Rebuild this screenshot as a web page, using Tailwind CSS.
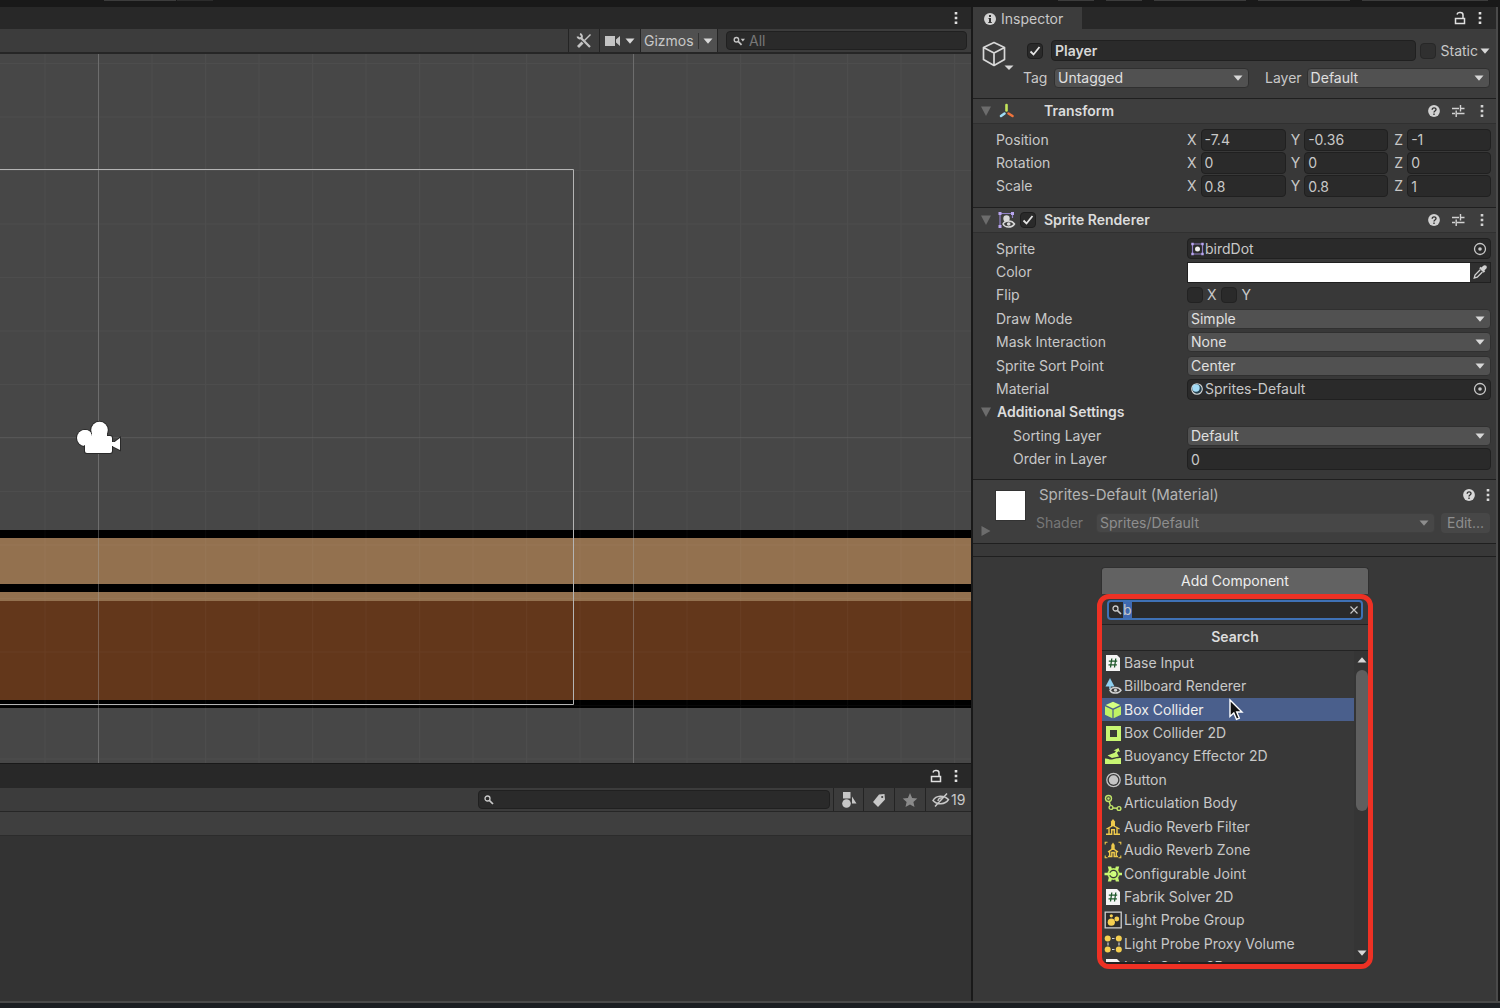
<!DOCTYPE html>
<html lang="en">

<head>
    <meta charset="UTF-8">
    <meta name="viewport" content="width=device-width, initial-scale=1.0">
    <title>Unity Editor</title>
    <script src="https://cdn.jsdelivr.net/npm/@tailwindcss/browser@4"></script>
</head>

<body class="h-screen overflow-hidden flex flex-col bg-[#191919] font-['Inter',sans-serif] text-sm leading-5 text-[#c8c8c8]">

    <!-- Icon sprite -->
    <svg class="hidden">
        <symbol id="kebab" viewBox="0 0 4 14">
            <path fill="currentColor" d="M.7 1h2.6v2.6H.7zM.7 5.7h2.6v2.6H.7zM.7 10.4h2.6V13H.7z" />
        </symbol>
        <symbol id="caret" viewBox="0 0 10 6">
            <path fill="currentColor" d="M.5.5h9L5 5.8z" />
        </symbol>
        <symbol id="fold" viewBox="0 0 12 12">
            <path fill="currentColor" d="M1 1.5h10L6 11z" />
        </symbol>
        <symbol id="lock" viewBox="0 0 12 14">
            <path fill="none" stroke="currentColor" stroke-width="1.5" d="M1.5 7.5h9v5h-9zM9 7V4a2.5 2.5 0 0 0-2.500-2.500h-1A2.500 2.500 0 0 0 3 3.500" />
        </symbol>
        <symbol id="search" viewBox="0 0 12 12">
            <circle cx="4.500" cy="4.500" r="2.500" fill="none" stroke="currentColor" stroke-width="1.300" />
            <path stroke="currentColor" stroke-width="1.700" d="M6.300 6.300l3.700 3.700" />
        </symbol>
        <symbol id="help" viewBox="0 0 12 12">
            <circle cx="6" cy="6" r="5.900" fill="currentColor" />
            <path fill="none" stroke="#333" stroke-width="1.400" d="M4.200 4.800C4.200 2.200 8 2.300 8 4.500 8 6 6 5.900 6 7.400M6 8.400v1.500" />
        </symbol>
        <symbol id="preset" viewBox="0 0 14 12">
            <path fill="none" stroke="currentColor" stroke-width="1.400" d="M1 3.500h7M9.500 0v6.500M10 3.500h3.500M1 8.500h3M5.200 5.500V12M6 8.500h7.500" />
        </symbol>
        <symbol id="check" viewBox="0 0 12 12">
            <path fill="none" stroke="currentColor" stroke-width="1.800" d="M1.500 6.500l3 3 6-7.500" />
        </symbol>
        <symbol id="target" viewBox="0 0 14 14">
            <circle cx="7" cy="7" r="5.500" fill="none" stroke="currentColor" stroke-width="1.300" />
            <circle cx="7" cy="7" r="1.800" fill="currentColor" />
        </symbol>
        <symbol id="script" viewBox="0 0 18 18">
            <path fill="#f4f4f4" d="M2 1h11l3 3v13H2z" />
            <path fill="none" stroke="#1f5a2c" stroke-width="1.300" d="M7.800 4.500l-1.300 9M11.800 4.500l-1.300 9M4.800 7.200h8.400M4.500 10.900h8.400" />
        </symbol>
    </svg>

    <!-- Lower edge of the main toolbar -->
    <div class="h-[7px] shrink-0 flex">
        <div class="ml-[104px] h-px w-[72px] bg-[#3c3c3c]"></div>
        <div class="ml-px h-px w-9 bg-[#2c2c2c]"></div>
        <div class="ml-auto mr-3 flex gap-3">
            <div class="h-px w-9 bg-[#3c3c3c]"></div>
            <div class="h-px w-9 bg-[#3c3c3c]"></div>
            <div class="h-px w-[92px] bg-[#3c3c3c]"></div>
            <div class="h-px w-[92px] bg-[#3c3c3c]"></div>
            <div class="h-px w-[126px] bg-[#3c3c3c]"></div>
        </div>
    </div>

    <div class="flex-1 min-h-0 flex gap-0.5">
        <div class="flex-1 min-w-0 flex flex-col">

            <!-- Scene view -->
            <section class="flex-1 min-h-0 flex flex-col">
                <div class="h-[22px] bg-[#282828] flex items-center justify-end pr-[13px]">
                    <button aria-label="Scene options" class="text-[#e0e0e0]"><svg class="w-1 h-3.5"><use href="#kebab" /></svg></button>
                </div>
                <div class="h-[25px] shrink-0 bg-[#3c3c3c] border-b-2 border-[#262626] flex items-stretch justify-end">
                    <button aria-label="Tools" class="w-[31px] border-l border-[#242424] flex items-center justify-center">
                        <svg class="size-4" viewBox="0 0 16 16" fill="none" stroke="#c4c4c4">
                            <path stroke-width="2.200" d="M4.500 4.500l9.500 9.500" />
                            <path stroke-width="2" d="M1.500 3.500a2.500 2.500 0 0 0 4 1.300A2.500 2.500 0 0 0 4 1" />
                            <path stroke-width="1.500" d="M14.500 1.500L8.500 7.500" />
                            <path stroke-width="2.800" d="M6.500 9.500L2 14" />
                        </svg>
                    </button>
                    <button aria-label="Scene camera" class="w-[41px] border-l border-[#242424] flex items-center justify-center gap-1">
                        <svg class="w-4 h-3" viewBox="0 0 16 12" fill="#c4c4c4"><path d="M0 1h10v10H0zM11 4.500L15 1v10l-4-3.500z" /></svg>
                        <svg class="w-2.5 h-1.5 text-[#d8d8d8]"><use href="#caret" /></svg>
                    </button>
                    <button class="w-[78px] border-x border-[#242424] bg-[#505050] flex items-center pl-[3px]">
                        <span>Gizmos</span>
                        <span class="ml-1 h-4 w-px bg-[#333]"></span>
                        <svg class="ml-1 w-2.5 h-1.5 text-[#d8d8d8]"><use href="#caret" /></svg>
                    </button>
                    <label class="my-0.5 ml-2 mr-1 w-[241px] flex items-center rounded border border-[#202020] bg-[#2a2a2a] pl-1.5">
                        <svg class="w-3 h-3 shrink-0" viewBox="0 0 14 12">
                            <circle cx="4" cy="4.500" r="2.600" fill="none" stroke="#c4c4c4" stroke-width="1.600" />
                            <path stroke="#c4c4c4" stroke-width="2" d="M6 6.500l4 4" />
                            <path fill="#c4c4c4" d="M9 3.500h5L11.500 6.500z" />
                        </svg>
                        <input aria-label="Search scene" placeholder="All" class="min-w-0 flex-1 pl-1 outline-none placeholder:text-[#777]">
                    </label>
                </div>
                <svg class="flex-1 min-h-0 w-full bg-[#474747]">
                    <defs>
                        <pattern id="grid" x="44.500" y="9" width="53.500" height="53.500" patternUnits="userSpaceOnUse">
                            <path stroke="#fff" stroke-opacity=".03" d="M.5 0v53.500M0 .5h53.500" />
                        </pattern>
                    </defs>
                    <rect y="476" width="100%" height="178" fill="#000" />
                    <rect y="484" width="100%" height="46" fill="#93714f" />
                    <rect y="538" width="100%" height="9" fill="#93714f" />
                    <rect y="547" width="100%" height="99" fill="#63371b" />
                    <rect width="100%" height="100%" fill="url(#grid)" />
                    <path stroke="#aaa" stroke-opacity=".35" d="M98.500 0v720M633.500 0v720" />
                    <path stroke="#fff" stroke-opacity=".07" d="M0 383.500h2000" />
                    <path fill="none" stroke="#b4b4b4" d="M-1 115.500h574.500v535H-1" />
                    <g fill="#fff" stroke="#2a2a2a" stroke-width="2" paint-order="stroke">
                        <path d="M112 390l8-6v12l-8-4z" />
                        <circle cx="85" cy="384" r="8" />
                        <circle cx="99.500" cy="376" r="8.300" />
                        <rect x="85" y="382" width="27" height="17" rx="2" />
                    </g>
                    <path fill="#fff" d="M78 384a7 7 0 0 1 14-2v-6a7.500 7.500 0 0 1 15 0v8l4 8v5H87v-6a7 7 0 0 1-9-7zM110 388h5v4h-5z" />
                </svg>
            </section>

            <!-- Project browser -->
            <section class="h-[238px] shrink-0 flex flex-col border-t border-[#191919]">
                <div class="h-6 bg-[#282828] flex items-center justify-end gap-3 pr-[13px] text-[#e0e0e0]">
                    <button aria-label="Lock project"><svg class="w-3 h-3.5"><use href="#lock" /></svg></button>
                    <button aria-label="Project options"><svg class="w-1 h-3.5"><use href="#kebab" /></svg></button>
                </div>
                <div class="h-6 bg-[#3c3c3c] border-b border-[#262626] flex justify-end">
                    <label class="my-0.5 mr-[3px] w-[352px] flex items-center rounded border border-[#202020] bg-[#2a2a2a] pl-1">
                        <svg class="size-3"><use href="#search" /></svg>
                        <input aria-label="Search project" class="min-w-0 flex-1 outline-none">
                    </label>
                    <button aria-label="Search by type" class="w-[30px] border-l border-[#242424] flex items-center justify-center">
                        <svg class="size-4" viewBox="0 0 16 16" fill="#c8c8c8"><path d="M2 0h7.500v6.500H2zM11 4.500l4.500 7h-4.500z" /><circle cx="5.500" cy="11.500" r="4.300" /></svg>
                    </button>
                    <button aria-label="Search by label" class="w-[31px] border-l border-[#242424] flex items-center justify-center">
                        <svg class="size-4" viewBox="0 0 16 16"><path fill="#c8c8c8" d="M8 2.500l5.500-.500.500 5.500-7 7.500-5-5z" /><circle cx="11.200" cy="5" r="1.100" fill="#3c3c3c" /></svg>
                    </button>
                    <button aria-label="Favorites" class="w-[31px] border-l border-[#242424] flex items-center justify-center">
                        <svg class="size-4" viewBox="0 0 16 16"><path fill="#8a8a8a" d="M8 1l2.100 4.900 5.200.500-3.900 3.500 1.100 5.200L8 12.400l-4.500 2.700 1.100-5.200L.7 6.400l5.200-.500z" /></svg>
                    </button>
                    <button class="w-[46px] border-l border-[#242424] flex items-center pl-1.5">
                        <svg class="w-[18px] h-4" viewBox="0 0 18 16" fill="none" stroke="#c8c8c8" stroke-width="1.500"><path d="M1 8.500C4 3 12 3 16.500 7.500 13 13 5 13 1 8.500zM3 14.500L15 1.500M6 9c.3-2.500 2-3.500 4.500-3" /></svg>
                        <span class="ml-px">19</span>
                    </button>
                </div>
                <div class="h-6 bg-[#3f3f3f] border-b border-[#2c2c2c]"></div>
                <div class="flex-1 bg-[#333]"></div>
            </section>
        </div>

        <!-- Inspector -->
        <aside class="w-[525px] shrink-0 flex flex-col bg-[#383838] border-r-2 border-[#4a4a4a] mr-0.5">
            <div class="h-[22px] shrink-0 bg-[#282828] flex items-center pr-3.5 text-[#e0e0e0]">
                <div class="h-full w-[109px] bg-[#3c3c3c] flex items-center gap-[5px] pl-[11px] pt-0.5 text-[#c8c8c8]">
                    <svg class="size-3" viewBox="0 0 12 12"><circle cx="6" cy="6" r="6" fill="#d2d2d2" /><path fill="#333" d="M5 2h2v2H5zM4.500 5H7v4h.8v1H4.300V9H5V6h-.5z" /></svg>
                    <h2>Inspector</h2>
                </div>
                <button aria-label="Lock inspector" class="ml-auto"><svg class="w-3 h-3.5"><use href="#lock" /></svg></button>
                <button aria-label="Inspector options" class="ml-3"><svg class="w-1 h-3.5"><use href="#kebab" /></svg></button>
            </div>

            <!-- Object header -->
            <div class="h-[69px] shrink-0 bg-[#3c3c3c] flex pt-[11px] pr-1.5">
                <button aria-label="Object icon" class="w-[54px] shrink-0 self-start pl-[9px]">
                    <svg class="w-8 h-[30px]" viewBox="0 0 32 30">
                        <path fill="none" stroke="#d8d8d8" stroke-width="1.700" stroke-linejoin="round" d="M12 2.500l10.500 5v12L12 25.500l-10.500-6v-12zM1.500 7.500L12 13l10.500-5.500M12 13v12" />
                        <path fill="#d8d8d8" d="M22.500 25.500h9L27 30z" />
                    </svg>
                </button>
                <div class="flex-1 min-w-0 flex flex-col gap-[7px]">
                    <div class="flex items-center">
                        <span class="relative size-4 shrink-0 mr-2">
                            <input type="checkbox" aria-label="Active" checked class="block size-4 appearance-none rounded-sm border border-[#1e1e1e] bg-[#2a2a2a]">
                            <svg class="absolute left-0.5 top-0.5 size-3 text-[#e4e4e4] pointer-events-none"><use href="#check" /></svg>
                        </span>
                        <input aria-label="Name" value="Player" class="h-[21px] min-w-0 flex-1 rounded border border-[#202020] bg-[#2a2a2a] px-[3px] font-semibold text-[#d8d8d8] outline-none">
                        <label class="ml-1 flex items-center gap-[5px]">
                            <input type="checkbox" class="size-4 appearance-none rounded-sm border border-[#272727] bg-[#303030]">
                            Static
                        </label>
                        <svg class="ml-0.5 w-2.5 h-1.5 text-[#d8d8d8]"><use href="#caret" /></svg>
                    </div>
                    <div class="flex items-center">
                        <label for="tag" class="w-7 -ml-1">Tag</label>
                        <div class="relative w-[195px] ml-[3px]">
                            <select id="tag" class="block h-5 w-full appearance-none rounded-sm border border-[#303030] bg-[#515151] px-[3px] leading-4 text-[#e0e0e0]"><option>Untagged</option></select>
                            <svg class="absolute right-1.5 top-[7px] w-2.5 h-1.5 text-[#d8d8d8] pointer-events-none"><use href="#caret" /></svg>
                        </div>
                        <label for="layer" class="ml-4 mr-[5px]">Layer</label>
                        <div class="relative flex-1">
                            <select id="layer" class="block h-5 w-full appearance-none rounded-sm border border-[#303030] bg-[#515151] px-[3px] leading-4 text-[#e0e0e0]"><option>Default</option></select>
                            <svg class="absolute right-1.5 top-[7px] w-2.5 h-1.5 text-[#d8d8d8] pointer-events-none"><use href="#caret" /></svg>
                        </div>
                    </div>
                </div>
            </div>

            <!-- Transform -->
            <section class="h-[109px] shrink-0 border-t border-[#1f1f1f]">
                <header class="h-[25px] bg-[#3e3e3e] border-b border-[#303030] flex items-center pl-[7px] pr-3">
                    <svg class="size-3 text-[#6c6c6c]"><use href="#fold" /></svg>
                    <svg class="ml-1.5 w-[18px] h-[18px]" viewBox="0 0 18 18" stroke-linecap="round" stroke-width="2.600">
                        <path stroke="#c3e55a" d="M8.500 3v5.500" /><path stroke="#9edcf5" d="M6.500 11.500L3 14" /><path stroke="#f0743c" d="M10.500 11.500l4 2.500" />
                    </svg>
                    <h3 class="ml-7 font-semibold text-[#dcdcdc]">Transform</h3>
                    <div class="ml-auto flex items-center gap-[11px] text-[#d2d2d2]">
                        <button aria-label="Transform help"><svg class="size-3"><use href="#help" /></svg></button>
                        <button aria-label="Transform presets"><svg class="w-3.5 h-3"><use href="#preset" /></svg></button>
                        <button aria-label="Transform options" class="ml-1"><svg class="w-1 h-3.5"><use href="#kebab" /></svg></button>
                    </div>
                </header>
                <div class="mt-1 h-[70px] grid auto-rows-fr pl-[23px] pr-[5px]">
                    <fieldset class="flex items-center">
                        <legend class="float-left w-[191px]">Position</legend>
                        <div class="flex-1 grid grid-cols-3 gap-1">
                            <label class="flex items-center">X<input value="-7.4" class="ml-1 h-[22px] min-w-0 flex-1 rounded border border-[#202020] bg-[#2a2a2a] px-[3px] outline-none"></label>
                            <label class="flex items-center pl-px">Y<input value="-0.36" class="ml-1 h-[22px] min-w-0 flex-1 rounded border border-[#202020] bg-[#2a2a2a] px-[3px] outline-none"></label>
                            <label class="flex items-center pl-0.5">Z<input value="-1" class="ml-1 h-[22px] min-w-0 flex-1 rounded border border-[#202020] bg-[#2a2a2a] px-[3px] outline-none"></label>
                        </div>
                    </fieldset>
                    <fieldset class="flex items-center">
                        <legend class="float-left w-[191px]">Rotation</legend>
                        <div class="flex-1 grid grid-cols-3 gap-1">
                            <label class="flex items-center">X<input value="0" class="ml-1 h-[22px] min-w-0 flex-1 rounded border border-[#202020] bg-[#2a2a2a] px-[3px] outline-none"></label>
                            <label class="flex items-center pl-px">Y<input value="0" class="ml-1 h-[22px] min-w-0 flex-1 rounded border border-[#202020] bg-[#2a2a2a] px-[3px] outline-none"></label>
                            <label class="flex items-center pl-0.5">Z<input value="0" class="ml-1 h-[22px] min-w-0 flex-1 rounded border border-[#202020] bg-[#2a2a2a] px-[3px] outline-none"></label>
                        </div>
                    </fieldset>
                    <fieldset class="flex items-center">
                        <legend class="float-left w-[191px]">Scale</legend>
                        <div class="flex-1 grid grid-cols-3 gap-1">
                            <label class="flex items-center">X<input value="0.8" class="ml-1 h-[22px] min-w-0 flex-1 rounded border border-[#202020] bg-[#2a2a2a] px-[3px] outline-none"></label>
                            <label class="flex items-center pl-px">Y<input value="0.8" class="ml-1 h-[22px] min-w-0 flex-1 rounded border border-[#202020] bg-[#2a2a2a] px-[3px] outline-none"></label>
                            <label class="flex items-center pl-0.5">Z<input value="1" class="ml-1 h-[22px] min-w-0 flex-1 rounded border border-[#202020] bg-[#2a2a2a] px-[3px] outline-none"></label>
                        </div>
                    </fieldset>
                </div>
            </section>

            <!-- Sprite Renderer -->
            <section class="h-[272px] shrink-0 border-t border-[#1f1f1f]">
                <header class="h-[25px] bg-[#3e3e3e] border-b border-[#303030] flex items-center pl-[7px] pr-3">
                    <svg class="size-3 text-[#6c6c6c]"><use href="#fold" /></svg>
                    <svg class="ml-1.5 w-[18px] h-[18px]" viewBox="0 0 18 18">
                        <path fill="none" stroke="#8f7fc4" stroke-width="1.200" d="M2 7v8.500M2 2.500h12.500V7M2 2.500V7" />
                        <path fill="#b9a6f0" d="M.5 1h3v3h-3zM13 1h3v3h-3zM.5 14h3v3h-3z" />
                        <circle cx="8.500" cy="7.500" r="3.200" fill="#d8d8d8" />
                        <path fill="#3e3e3e" stroke="#d8d8d8" stroke-width="1.500" d="M5 13c2-4 9-4 11.500 0-2.500 4-9.500 4-11.500 0z" />
                        <circle cx="10.700" cy="13" r="1.800" fill="#d8d8d8" />
                    </svg>
                    <span class="relative size-4 ml-1">
                        <input type="checkbox" aria-label="Sprite Renderer enabled" checked class="block size-4 appearance-none rounded-sm border border-[#1e1e1e] bg-[#2a2a2a]">
                        <svg class="absolute left-0.5 top-0.5 size-3 text-[#e4e4e4] pointer-events-none"><use href="#check" /></svg>
                    </span>
                    <h3 class="ml-2 font-semibold text-[#dcdcdc]">Sprite Renderer</h3>
                    <div class="ml-auto flex items-center gap-[11px] text-[#d2d2d2]">
                        <button aria-label="Sprite Renderer help"><svg class="size-3"><use href="#help" /></svg></button>
                        <button aria-label="Sprite Renderer presets"><svg class="w-3.5 h-3"><use href="#preset" /></svg></button>
                        <button aria-label="Sprite Renderer options" class="ml-1"><svg class="w-1 h-3.5"><use href="#kebab" /></svg></button>
                    </div>
                </header>
                <div class="mt-1 h-[234px] grid auto-rows-fr pl-[23px] pr-[5px]">
                    <div class="flex items-center">
                        <span class="w-[191px]">Sprite</span>
                        <button aria-label="Sprite birdDot" class="h-[21px] flex-1 flex items-center rounded-sm border border-[#202020] bg-[#2a2a2a] pl-[3px] pr-[3px]">
                            <svg class="size-3.5" viewBox="0 0 14 14">
                                <path fill="none" stroke="#8f7fc4" stroke-width="1.200" d="M1.500 2h10v10h-10z" />
                                <path fill="#b9a6f0" d="M.3.8h2.400v2.400H.3zM10.300.8h2.400v2.400h-2.400zM.3 10.800h2.400v2.400H.3zM10.300 10.800h2.400v2.400h-2.400z" />
                                <circle cx="6.500" cy="7" r="2.500" fill="#eee" />
                            </svg>
                            <span>birdDot</span>
                            <svg class="ml-auto size-3.5"><use href="#target" /></svg>
                        </button>
                    </div>
                    <div class="flex items-center">
                        <span class="w-[191px]">Color</span>
                        <div class="h-[21px] flex-1 flex items-center border border-[#202020] bg-[#303030]">
                            <button aria-label="Color" class="h-full flex-1 bg-white"></button>
                            <button aria-label="Pick color" class="px-[3px]">
                                <svg class="size-3.5" viewBox="0 0 14 14"><path fill="#d0d0d0" d="M13.300.8c-1.200-1.200-2.500-.6-3.300.3L8.500 2.600l-.8-.8-1.500 1.500 4.500 4.500 1.500-1.500-.8-.8 1.500-1.500c.9-.8 1.300-2.100.4-3.200z" /><path fill="none" stroke="#d0d0d0" stroke-width="1.300" d="M7.200 4.800L2 10l-.8 3 3-.8 5.200-5.200" /></svg>
                            </button>
                        </div>
                    </div>
                    <fieldset class="flex items-center">
                        <legend class="float-left w-[191px]">Flip</legend>
                        <label class="flex items-center gap-1"><input type="checkbox" class="size-4 appearance-none rounded-sm border border-[#222] bg-[#2a2a2a]">X</label>
                        <label class="ml-1 flex items-center gap-[5px]"><input type="checkbox" class="size-4 appearance-none rounded-sm border border-[#222] bg-[#2a2a2a]">Y</label>
                    </fieldset>
                    <div class="flex items-center">
                        <label for="drawMode" class="w-[191px]">Draw Mode</label>
                        <div class="relative flex-1">
                            <select id="drawMode" class="block h-5 w-full appearance-none rounded-sm border border-[#303030] bg-[#515151] px-[3px] leading-4 text-[#e0e0e0]"><option>Simple</option></select>
                            <svg class="absolute right-1.5 top-[7px] w-2.5 h-1.5 text-[#d8d8d8] pointer-events-none"><use href="#caret" /></svg>
                        </div>
                    </div>
                    <div class="flex items-center">
                        <label for="maskInteraction" class="w-[191px]">Mask Interaction</label>
                        <div class="relative flex-1">
                            <select id="maskInteraction" class="block h-5 w-full appearance-none rounded-sm border border-[#303030] bg-[#515151] px-[3px] leading-4 text-[#e0e0e0]"><option>None</option></select>
                            <svg class="absolute right-1.5 top-[7px] w-2.5 h-1.5 text-[#d8d8d8] pointer-events-none"><use href="#caret" /></svg>
                        </div>
                    </div>
                    <div class="flex items-center">
                        <label for="sortPoint" class="w-[191px]">Sprite Sort Point</label>
                        <div class="relative flex-1">
                            <select id="sortPoint" class="block h-5 w-full appearance-none rounded-sm border border-[#303030] bg-[#515151] px-[3px] leading-4 text-[#e0e0e0]"><option>Center</option></select>
                            <svg class="absolute right-1.5 top-[7px] w-2.5 h-1.5 text-[#d8d8d8] pointer-events-none"><use href="#caret" /></svg>
                        </div>
                    </div>
                    <div class="flex items-center">
                        <span class="w-[191px]">Material</span>
                        <button aria-label="Material Sprites-Default" class="h-[21px] flex-1 flex items-center rounded-sm border border-[#202020] bg-[#2a2a2a] pl-[3px] pr-[3px]">
                            <svg class="size-3.5" viewBox="0 0 14 14"><circle cx="6" cy="7" r="5.300" fill="#23404e" stroke="#d8d8d8" stroke-width="1.100" /><circle cx="5" cy="6" r="3.700" fill="#a4dcf6" /></svg>
                            <span>Sprites-Default</span>
                            <svg class="ml-auto size-3.5"><use href="#target" /></svg>
                        </button>
                    </div>
                    <button class="-ml-4 flex items-center font-semibold text-[#dcdcdc]">
                        <svg class="size-3 mr-[5px] text-[#6c6c6c]"><use href="#fold" /></svg>
                        Additional Settings
                    </button>
                    <div class="flex items-center">
                        <label for="sortingLayer" class="w-[191px] pl-[17px]">Sorting Layer</label>
                        <div class="relative flex-1">
                            <select id="sortingLayer" class="block h-5 w-full appearance-none rounded-sm border border-[#303030] bg-[#515151] px-[3px] leading-4 text-[#e0e0e0]"><option>Default</option></select>
                            <svg class="absolute right-1.5 top-[7px] w-2.5 h-1.5 text-[#d8d8d8] pointer-events-none"><use href="#caret" /></svg>
                        </div>
                    </div>
                    <div class="flex items-center">
                        <label for="orderInLayer" class="w-[191px] pl-[17px]">Order in Layer</label>
                        <input id="orderInLayer" value="0" class="h-[22px] min-w-0 flex-1 rounded border border-[#202020] bg-[#2a2a2a] px-[3px] outline-none">
                    </div>
                </div>
            </section>

            <!-- Material -->
            <section class="h-16 shrink-0 border-t border-[#1f1f1f] bg-[#3e3e3e] flex pl-[7px] pr-1.5 pt-[5px]">
                <button aria-label="Expand material" class="self-end mb-1.5"><svg class="size-3" viewBox="0 0 12 12"><path fill="#6c6c6c" d="M1.500 1l9 5-9 5z" /></svg></button>
                <div class="ml-[3px] mt-[5px] size-[31px] shrink-0 border border-[#333] bg-white"></div>
                <div class="ml-2.5 flex-1 min-w-0 flex flex-col gap-2">
                    <div class="flex items-center pl-[3px] text-[#b4b4b4]">
                        <h3 class="text-[15px]">Sprites-Default (Material)</h3>
                        <button aria-label="Material help" class="ml-auto text-[#d8d8d8]"><svg class="size-3"><use href="#help" /></svg></button>
                        <button aria-label="Material options" class="ml-[11px] text-[#d8d8d8]"><svg class="w-1 h-3.5"><use href="#kebab" /></svg></button>
                    </div>
                    <div class="flex items-center">
                        <label for="shader" class="w-[60px] text-[#777]">Shader</label>
                        <div class="relative flex-1">
                            <select id="shader" disabled class="block h-5 w-full appearance-none rounded-sm border border-[#404040] bg-[#474747] px-[3px] leading-4 text-[#8e8e8e] opacity-100"><option>Sprites/Default</option></select>
                            <svg class="absolute right-1.5 top-[7px] w-2.5 h-1.5 text-[#8e8e8e] pointer-events-none"><use href="#caret" /></svg>
                        </div>
                        <button disabled class="ml-1.5 h-5 w-[49px] rounded-sm bg-[#474747] text-[#8e8e8e]">Edit...</button>
                    </div>
                </div>
            </section>
            <div class="h-3.5 shrink-0 border-y border-[#1f1f1f]"></div>

            <!-- Add Component and its search menu -->
            <div class="mt-2.5 pl-px flex flex-col items-center">
                <button class="h-[27px] w-[268px] rounded-t-sm border border-[#303030] border-b-0 bg-[#626262] leading-6 text-[#eee]">Add Component</button>
                <div class="w-[276px] h-[375px] rounded-xl border-[5px] border-[#ee3124] bg-[#383838] overflow-hidden flex flex-col">
                    <div class="h-[26px] shrink-0 border-b border-[#232323] px-[5px] pt-px">
                        <div class="h-5 flex items-center rounded border-2 border-[#3f71b5] bg-[#2a2a2a] pl-0.5 pr-0.5">
                            <svg class="size-3 shrink-0"><use href="#search" /></svg>
                            <input id="componentSearch" aria-label="Search components" value="b" class="h-4 min-w-0 flex-1 leading-4 outline-none caret-transparent selection:bg-[#3f69b0] selection:text-[#c8c8c8]">
                            <button aria-label="Clear search"><svg class="size-2.5" viewBox="0 0 10 10"><path stroke="#c8c8c8" stroke-width="1.200" d="M1.500 1.500l7 7M8.500 1.500l-7 7" /></svg></button>
                        </div>
                    </div>
                    <h3 class="h-[26px] shrink-0 border-b border-[#232323] bg-[#3f3f3f] text-center leading-6 font-semibold text-[#dcdcdc]">Search</h3>
                    <div class="flex-1 min-h-0 flex overflow-hidden border-b-2 border-[#222]">
                        <ul class="h-[328px] flex-1 grid auto-rows-fr">
                            <li class="flex"><button class="flex-1 flex items-center gap-0.5 pl-0.5">
                                <svg class="size-[18px]"><use href="#script" /></svg>Base Input</button></li>
                            <li class="flex"><button class="flex-1 flex items-center gap-0.5 pl-0.5">
                                <svg class="size-[18px]" viewBox="0 0 18 18"><path fill="#8fd0f0" d="M6 1l4.500 8.500h-9z" /><path stroke="#8fd0f0" stroke-width="1.500" d="M6 9v3" /><path fill="none" stroke="#d0d0d0" stroke-width="1.500" d="M6 13.300c2-3.700 8.500-3.700 11 0-2.500 3.700-9 3.700-11 0z" /><circle cx="11.500" cy="13.200" r="1.600" fill="#d0d0d0" /></svg>Billboard Renderer</button></li>
                            <li class="flex bg-[#4a5f8c]"><button class="flex-1 flex items-center gap-0.5 pl-0.5 text-[#eee]">
                                <svg class="size-[18px]" viewBox="0 0 18 18"><path fill="#d6ff82" d="M9 .8l7.300 3.200L9 7.400 1.700 4z" /><path fill="#c0f264" d="M1 5.200l7.400 3.500v8.600L1 13.700zM17 5.200L9.600 8.700v8.600l7.400-3.600z" /></svg>Box Collider</button></li>
                            <li class="flex"><button class="flex-1 flex items-center gap-0.5 pl-0.5">
                                <svg class="size-[18px]" viewBox="0 0 18 18"><path fill="none" stroke="#c8f573" stroke-width="4" d="M4 4h11v11H4z" /></svg>Box Collider 2D</button></li>
                            <li class="flex"><button class="flex-1 flex items-center gap-0.5 pl-0.5">
                                <svg class="size-[18px]" viewBox="0 0 18 18"><path fill="#c8f573" d="M1 11.500c3-.5 4 1.500 7 1s4-1.500 9-1.500v6H1zM3.500 8.500l9-3.500 2.500 4.500-7 1.500zM9.500 3.500L14.500 1l1.500 4-1.500-.800-3 3-1.200-1.200L12 4z" /></svg>Buoyancy Effector 2D</button></li>
                            <li class="flex"><button class="flex-1 flex items-center gap-0.5 pl-0.5">
                                <svg class="size-[18px]" viewBox="0 0 18 18"><circle cx="9.500" cy="9" r="6.700" fill="none" stroke="#c4c4c4" stroke-width="1.300" /><circle cx="9.500" cy="9" r="4.700" fill="#c4c4c4" /></svg>Button</button></li>
                            <li class="flex"><button class="flex-1 flex items-center gap-0.5 pl-0.5">
                                <svg class="size-[18px]" viewBox="0 0 18 18" fill="none" stroke="#c0e468" stroke-width="1.400"><circle cx="4.500" cy="4.500" r="3" /><circle cx="4.500" cy="4.500" r=".6" /><circle cx="7" cy="13.500" r="1.900" /><circle cx="15" cy="14.500" r="1.900" /><path d="M5.200 7.500l1.200 4M9 14l4 .3" /></svg>Articulation Body</button></li>
                            <li class="flex"><button class="flex-1 flex items-center gap-0.5 pl-0.5">
                                <svg class="size-[18px]" viewBox="0 0 18 18" fill="none" stroke="#edc94c" stroke-width="1.400"><path fill="#edc94c" stroke="none" d="M9 1l2 2.500V8H7V3.500z" /><path d="M2.500 11L9 7.500l6.500 3.500M5 10v6M13 10v6M2 16.300h5.700v-4.500h2.600v4.500H16" /></svg>Audio Reverb Filter</button></li>
                            <li class="flex"><button class="flex-1 flex items-center gap-0.5 pl-0.5">
                                <svg class="size-[18px]" viewBox="0 0 18 18" fill="none" stroke="#edc94c" stroke-width="1.400"><path fill="#edc94c" stroke="none" d="M9 1.500l1.700 2.500v4H7.300V4z" /><path d="M4 11l5-3.300 5 3.300M5.700 10v5.500M12.300 10v5.500M4 15.500h3.800v-4h2.400v4H14" /><path stroke-width="1.100" d="M1.200 3.500V1.200h2.300M14.500 1.200h2.300v2.300M1.200 14.500v2.300h2.300M14.500 16.800h2.300v-2.300" /></svg>Audio Reverb Zone</button></li>
                            <li class="flex"><button class="flex-1 flex items-center gap-0.5 pl-0.5">
                                <svg class="size-[18px]" viewBox="0 0 18 18"><circle cx="9.500" cy="9" r="5.200" fill="none" stroke="#b4e85e" stroke-width="1.800" /><circle cx="9.500" cy="9" r="3" fill="#d0ff80" /><path stroke="#c8f573" stroke-width="2.400" d="M.5 9H9M15 9h3" /><path fill="#c8f573" d="M3.800 1.500h3.400l.8 3-3 1.500zM15.200 1.500h-3.400l-.8 3 3 1.500zM3.800 16.500h3.400l.8-3-3-1.500zM15.200 16.500h-3.400l-.8-3 3-1.500z" /></svg>Configurable Joint</button></li>
                            <li class="flex"><button class="flex-1 flex items-center gap-0.5 pl-0.5">
                                <svg class="size-[18px]"><use href="#script" /></svg>Fabrik Solver 2D</button></li>
                            <li class="flex"><button class="flex-1 flex items-center gap-0.5 pl-0.5">
                                <svg class="size-[18px]" viewBox="0 0 18 18"><path fill="#2c2c2c" stroke="#d0d0d0" stroke-width="1.300" d="M1.200 1.200h16v15.600h-16z" /><g fill="#f5cf50"><circle cx="7.300" cy="11.200" r="3.600" /><circle cx="12.800" cy="8" r="2.400" /><circle cx="7.300" cy="4.800" r="1.600" /></g></svg>Light Probe Group</button></li>
                            <li class="flex"><button class="flex-1 flex items-center gap-0.5 pl-0.5">
                                <svg class="size-[18px]" viewBox="0 0 18 18"><path fill="none" stroke="#d0d0d0" stroke-width="1.200" d="M8 3.500h2.500M8 14.500h2.500M4 7.500v3M15 7.500v3" /><g fill="#f5cf50"><circle cx="3.700" cy="3.500" r="3" /><circle cx="14.800" cy="3.500" r="3" /><circle cx="3.700" cy="14.500" r="3" /><circle cx="14.800" cy="14.500" r="3" /></g></svg>Light Probe Proxy Volume</button></li>
                            <li class="flex"><button class="flex-1 flex items-center gap-0.5 pl-0.5">
                                <svg class="size-[18px]"><use href="#script" /></svg>Limb Solver 2D</button></li>
                        </ul>
                        <!-- Scrollbar -->
                        <div class="w-3.5 bg-[#353535] flex flex-col items-center pt-1.5 pb-1.5 pl-px text-[#d8d8d8]">
                            <svg class="w-2.5 h-1.5 rotate-180"><use href="#caret" /></svg>
                            <div class="mt-[7px] h-[141px] w-3 rounded-full bg-[#5f5f5f]"></div>
                            <svg class="mt-auto w-2.5 h-1.5"><use href="#caret" /></svg>
                        </div>
                    </div>
                </div>
            </div>
        </aside>
    </div>

    <!-- Window edge -->
    <div class="h-[7px] shrink-0 border-t-2 border-[#4a4a4a] bg-[#1b1e22]"></div>

    <!-- Mouse pointer -->
    <svg class="absolute left-[1228px] top-[698px] w-4 h-6 pointer-events-none" viewBox="0 0 16 24">
        <path fill="#111" stroke="#fff" stroke-width="1.400" d="M2 2v16.500l3.800-3.500 2.700 6.300 2.800-1.200-2.600-6.100H14z" />
    </svg>

    <script>
        document.getElementById('componentSearch').select();
    </script>
</body>

</html>
